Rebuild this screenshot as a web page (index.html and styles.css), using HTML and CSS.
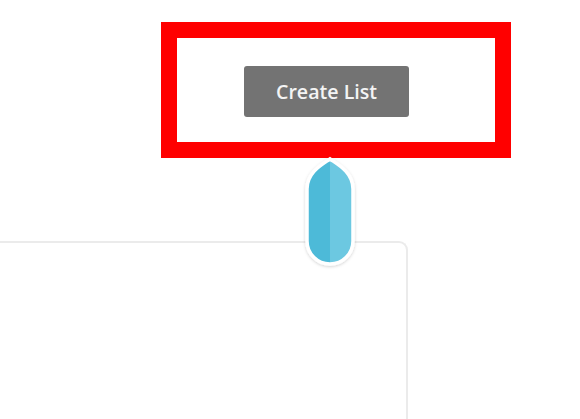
FILE: index.html
```html
<!DOCTYPE html>
<html lang="en">
<head>
  <meta charset="UTF-8">
  <meta name="viewport" content="width=device-width, initial-scale=1.0">
  <title>Create List</title>
  <link rel="stylesheet" href="styles.css">
</head>
<body>

<div class="page">
  <div class="highlight">
    <button class="create-btn" type="button">Create List</button>
  </div>

  <div class="card"></div>

  <!-- pointer pin sitting over the card edge -->
  <svg class="pin" width="56" height="116" viewBox="0 0 56 116">
    <defs>
      <linearGradient id="pin-fill" x1="0" x2="1" y1="0" y2="0">
        <stop offset="0.5" stop-color="#4dbad8"></stop>
        <stop offset="0.5" stop-color="#6cc8e1"></stop>
      </linearGradient>
      <filter id="pin-shadow" x="-30%" y="-20%" width="160%" height="140%">
        <feDropShadow dx="0" dy="1" stdDeviation="1.6" flood-color="#000" flood-opacity="0.18"></feDropShadow>
      </filter>
    </defs>
    <path d="M28 3 C35 8 51 16 51 33 L51 85 A23 23 0 0 1 5 85 L5 33 C5 16 21 8 28 3 Z"
          fill="url(#pin-fill)" stroke="#fff" stroke-width="3.5" filter="url(#pin-shadow)"></path>
  </svg>
</div>

</body>
</html>
```

FILE: styles.css
```css
* {
  box-sizing: border-box;
  margin: 0;
  padding: 0;
}

html, body {
  width: 100%;
  height: 100%;
  overflow: hidden;
  background: #fff;
  font-family: "Open Sans", Arial, sans-serif;
}

.page {
  position: relative;
  height: 100%;
  padding-top: 22px;
  display: flex;
  flex-direction: column;
}

.highlight {
  width: 350px;
  height: 136px;
  flex-shrink: 0;
  margin-left: 161px;
  border: 16px solid #ff0000;
  display: flex;
  align-items: center;
  padding-left: 67px;
}

.create-btn {
  width: 165px;
  height: 51px;
  margin-top: 2px;
  background: #737373;
  border: none;
  border-radius: 3px;
  color: #f4f4f4;
  font-family: "Open Sans", Arial, sans-serif;
  font-size: 19.6px;
  font-weight: 600;
  cursor: pointer;
}

.card {
  flex: 1;
  width: 420px;
  margin-top: 83px;
  margin-left: -12px;
  border: 2px solid #ebebeb;
  border-bottom: none;
  border-radius: 9px 9px 0 0;
}

.pin {
  position: absolute;
  top: 156px;
  left: 302px;
}
```
